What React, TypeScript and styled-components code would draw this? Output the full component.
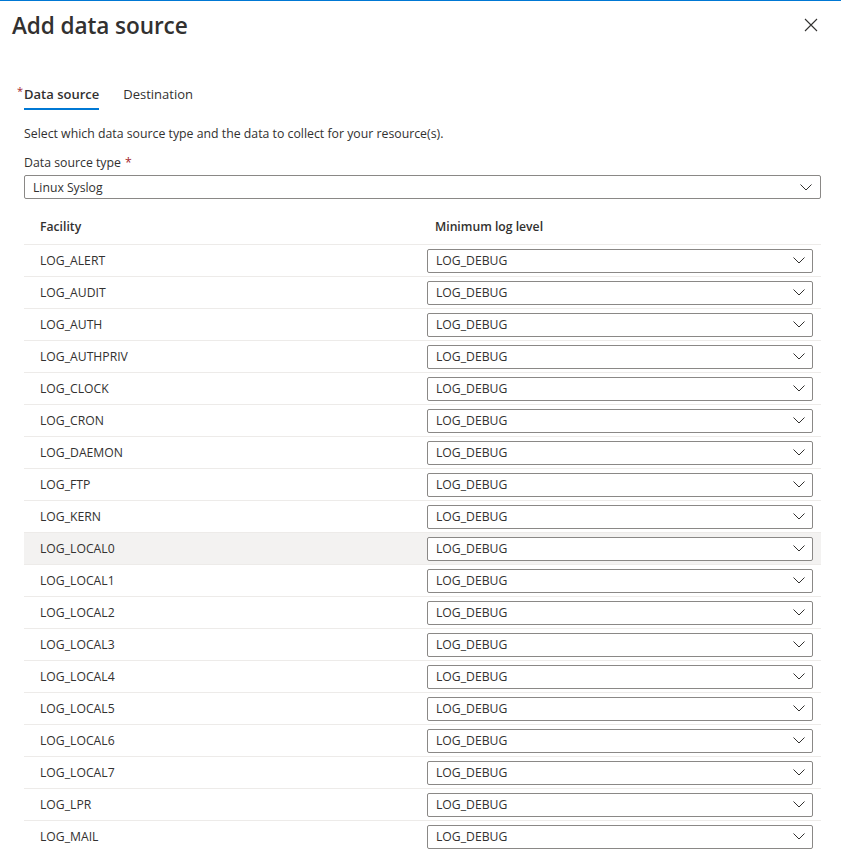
import styled, { createGlobalStyle } from "styled-components";

const GlobalStyle = createGlobalStyle`
  body {
    margin: 0;
    font-family: "Open Sans", "Noto Sans", sans-serif;
    color: #323130;
    background: #ffffff;
  }
`;

const Panel = styled.div`
  border-top: 1px solid #0078d4;
  width: 841px;
  height: 850px;
  overflow: hidden;
  box-sizing: border-box;
`;

const Header = styled.header`
  display: flex;
  justify-content: space-between;
  align-items: center;
  height: 48px;
  padding: 0 22px 0 12px;
`;

const Title = styled.h1`
  margin: 0;
  font-size: 22.6px;
  font-weight: 600;
  letter-spacing: -0.1px;
`;

const CloseButton = styled.button`
  border: none;
  background: none;
  padding: 0;
  width: 16px;
  height: 16px;
  display: flex;
  align-items: center;
  justify-content: center;
  cursor: pointer;
`;

const Body = styled.div`
  padding: 0 20px 0 24px;
`;

const Tabs = styled.nav`
  display: flex;
  gap: 24px;
  margin-top: 35px;
`;

const Tab = styled.div<{ $active?: boolean }>`
  position: relative;
  font-size: 13px;
  line-height: 20px;
  font-weight: ${(p) => (p.$active ? 600 : 400)};
  &::after {
    content: "";
    display: block;
    height: 2px;
    margin-top: 4px;
    background: ${(p) => (p.$active ? "#0078d4" : "transparent")};
  }
`;

const TabStar = styled.span`
  position: absolute;
  left: -7px;
  top: -3px;
  color: #a4262c;
  font-size: 11px;
  font-weight: 400;
`;

const Description = styled.p`
  margin: 14px 0 0;
  font-size: 12.3px;
  line-height: 20px;
`;

const Label = styled.div`
  margin-top: 9px;
  font-size: 12.3px;
  line-height: 20px;
`;

const Required = styled.span`
  color: #a4262c;
  margin-left: 4px;
`;

const Select = styled.div<{ $wide?: boolean }>`
  display: flex;
  align-items: center;
  justify-content: space-between;
  box-sizing: border-box;
  height: 24px;
  border: 1px solid #8a8886;
  border-radius: 2px;
  background: #ffffff;
  padding: ${(p) => (p.$wide ? "0 8px 0 8px" : "0 7px 0 8px")};
  font-size: 12.2px;
  margin-top: ${(p) => (p.$wide ? "2px" : "0")};
`;

const Table = styled.div`
  margin-top: 10px;
`;

const Row = styled.div<{ $head?: boolean; $hover?: boolean }>`
  display: grid;
  grid-template-columns: 395px 1fr;
  align-items: center;
  height: ${(p) => (p.$head ? "36px" : "32px")};
  border-bottom: 1px solid #edebe9;
  box-sizing: border-box;
  background: ${(p) => (p.$hover ? "#f3f2f1" : "transparent")};
  font-size: 12.2px;
  font-weight: ${(p) => (p.$head ? 600 : 400)};
`;

const Cell = styled.div<{ $select?: boolean }>`
  padding: ${(p) => (p.$select ? "0 8px" : "0 16px")};
`;

const Chevron = () => (
  <svg width="12" height="7" viewBox="0 0 12 7" fill="none">
    <path d="M0.5 0.5 L6 6 L11.5 0.5" stroke="#323130" strokeWidth="1" />
  </svg>
);

const facilities = [
  "LOG_ALERT",
  "LOG_AUDIT",
  "LOG_AUTH",
  "LOG_AUTHPRIV",
  "LOG_CLOCK",
  "LOG_CRON",
  "LOG_DAEMON",
  "LOG_FTP",
  "LOG_KERN",
  "LOG_LOCAL0",
  "LOG_LOCAL1",
  "LOG_LOCAL2",
  "LOG_LOCAL3",
  "LOG_LOCAL4",
  "LOG_LOCAL5",
  "LOG_LOCAL6",
  "LOG_LOCAL7",
  "LOG_LPR",
  "LOG_MAIL",
];

const App = () => (
  <>
    <GlobalStyle />
    <Panel>
      <Header>
        <Title>Add data source</Title>
        <CloseButton aria-label="Close">
          <svg width="14" height="14" viewBox="0 0 14 14">
            <path d="M1 1 L13 13 M13 1 L1 13" stroke="#323130" strokeWidth="1.1" />
          </svg>
        </CloseButton>
      </Header>
      <Body>
        <Tabs>
          <Tab $active>
            <TabStar>*</TabStar>
            Data source
          </Tab>
          <Tab>Destination</Tab>
        </Tabs>
        <Description>
          Select which data source type and the data to collect for your resource(s).
        </Description>
        <Label>
          Data source type<Required>*</Required>
        </Label>
        <Select $wide>
          Linux Syslog
          <Chevron />
        </Select>
        <Table>
          <Row $head>
            <Cell>Facility</Cell>
            <Cell>Minimum log level</Cell>
          </Row>
          {facilities.map((f) => (
            <Row key={f} $hover={f === "LOG_LOCAL0"}>
              <Cell>{f}</Cell>
              <Cell $select>
                <Select>
                  LOG_DEBUG
                  <Chevron />
                </Select>
              </Cell>
            </Row>
          ))}
        </Table>
      </Body>
    </Panel>
  </>
);

export default App;
